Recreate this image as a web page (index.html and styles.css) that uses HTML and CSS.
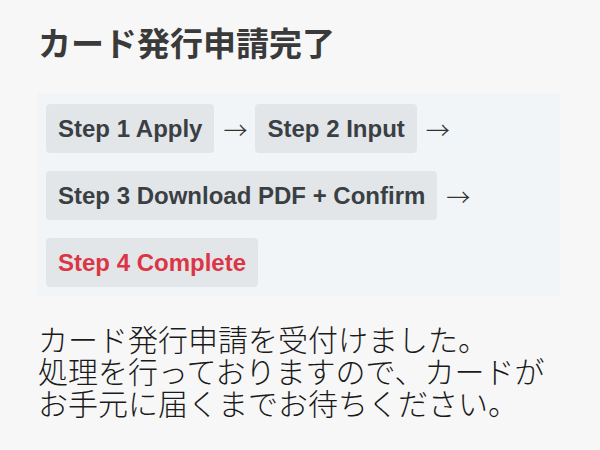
FILE: index.html
```html
<!DOCTYPE html>
<html lang="ja">
<head>
<meta charset="utf-8">
<link rel="stylesheet" href="styles.css">
</head>
<body>
<main class="page">
  <h1 class="title">カード発行申請完了</h1>
  <div class="steps">
    <span class="step">Step 1 Apply</span><span class="arrow">→</span>
    <span class="step">Step 2 Input</span><span class="arrow">→</span>
    <span class="step">Step 3 Download PDF + Confirm</span><span class="arrow">→</span>
    <span class="step step-current">Step 4 Complete</span>
  </div>
  <p class="message">カード発行申請を受付けました。<br>処理を行っておりますので、カードが<br>お手元に届くまでお待ちください。</p>
</main>
</body>
</html>
```

FILE: styles.css
```css
html, body {
  margin: 0;
  padding: 0;
  background: #f7f7f7;
}
.page {
  padding: 18px 10px 0 38px;
  font-family: "Noto Sans CJK JP", sans-serif;
  color: #333;
}
.title {
  margin: 0 0 27px;
  font-size: 33px;
  line-height: 48px;
  font-weight: 700;
  color: #3a3a3a;
}
.steps {
  display: flex;
  flex-wrap: wrap;
  align-items: center;
  row-gap: 18px;
  width: 506px;
  padding: 11px 8px 9px;
  background: #f2f5f8;
  font-family: "Liberation Sans", Arial, sans-serif;
}
.step {
  display: inline-block;
  padding: 11px 12px;
  line-height: 27px;
  font-size: 24px;
  font-weight: 700;
  color: #3a3f44;
  background: #e3e6e9;
  border-radius: 4px;
}
.step-current {
  color: #dc3545;
}
.arrow {
  margin: 0 8px 0 9px;
  font-family: "Noto Sans CJK JP", sans-serif;
  font-size: 24px;
  line-height: 27px;
  font-weight: 300;
  color: #333;
}
.message {
  margin: 26px 0 0;
  font-size: 30px;
  line-height: 32px;
  font-weight: 300;
  color: #1a1a1a;
}
```
